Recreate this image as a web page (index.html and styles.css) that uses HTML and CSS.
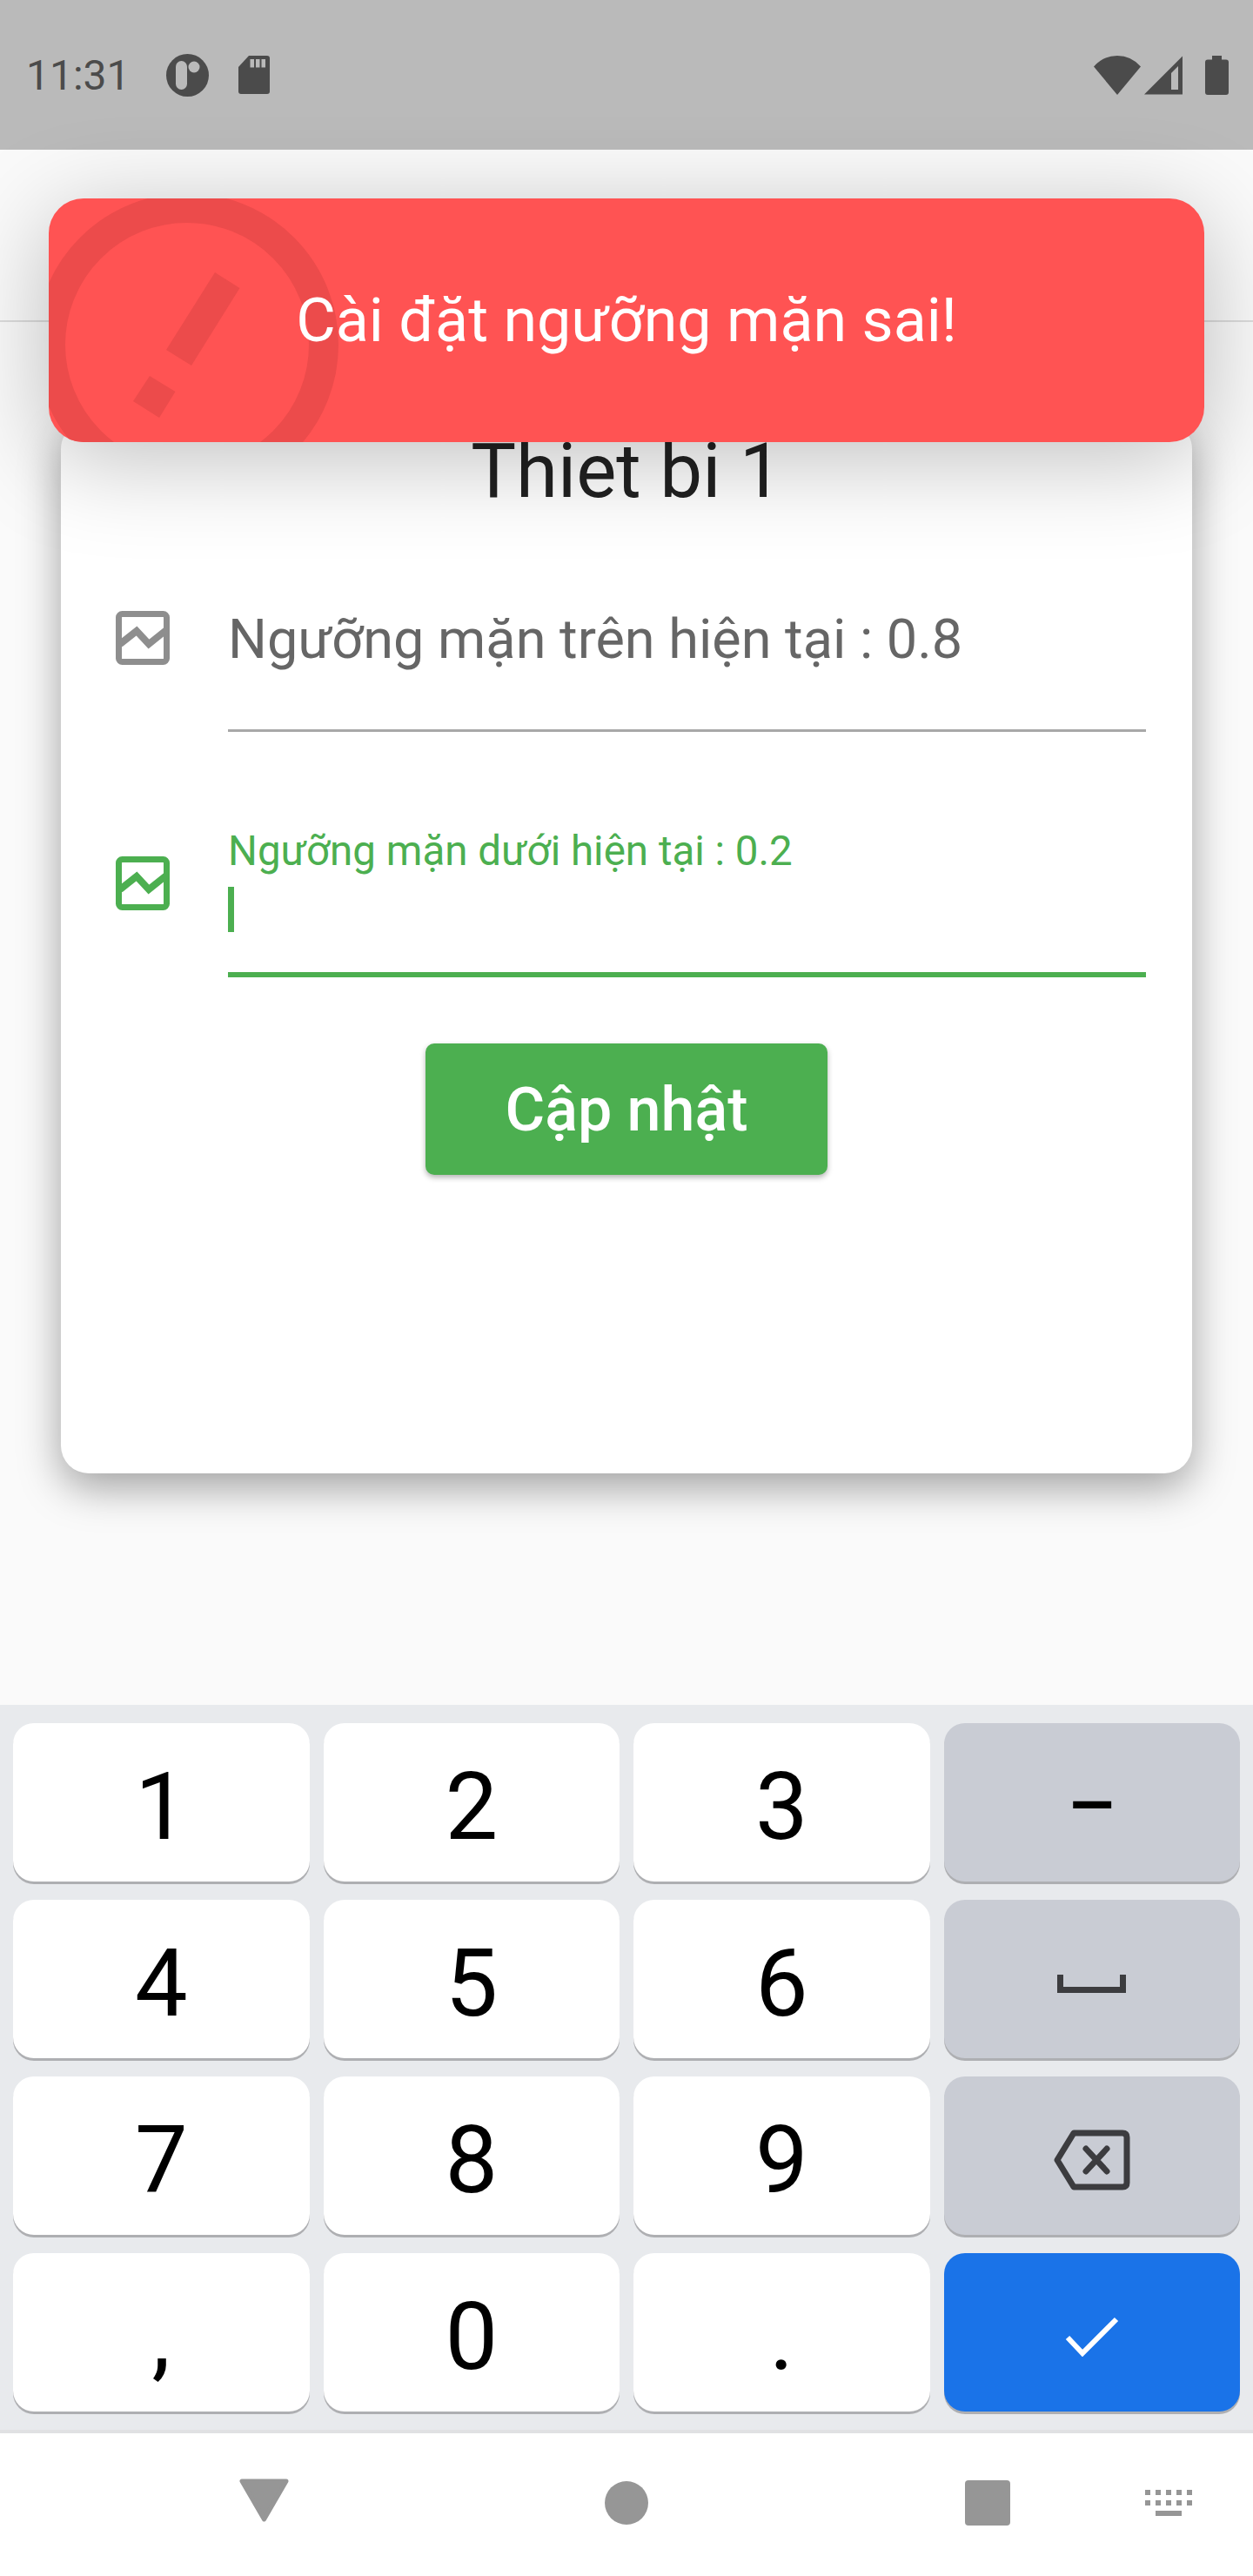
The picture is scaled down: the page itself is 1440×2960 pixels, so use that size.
FILE: index.html
```html
<!DOCTYPE html>
<html lang="vi">

<head>
    <meta charset="UTF-8">
    <meta name="viewport" content="width=device-width, initial-scale=1.0">
    <title>Cài đặt ngưỡng mặn</title>
    <link rel="stylesheet" href="styles.css">
</head>

<body>
    <div class="screen">
        <div class="status-bar">
            <span class="time">11:31</span>
            <svg class="status-app" width="49" height="49" viewBox="0 0 49 49">
                <circle cx="24.5" cy="24.5" r="24.5" fill="#4b4b4b" />
                <rect x="11" y="8" width="13" height="33" rx="6.5" fill="#bababa" />
                <circle cx="32" cy="15" r="6.5" fill="#bababa" />
            </svg>
            <svg class="status-sd" width="36" height="44" viewBox="0 0 36 44">
                <path d="M12 0H33a3 3 0 0 1 3 3V41a3 3 0 0 1-3 3H3a3 3 0 0 1-3-3V13Z" fill="#4b4b4b" />
                <path d="M13.5 4H18V13.5H13.5ZM20 4H24.5V13.5H20ZM26.5 4H31V13.5H26.5Z" fill="#bababa" />
            </svg>
            <div class="status-right">
                <svg width="54" height="45" viewBox="0 0 54 45">
                    <path d="M0 12.500Q11 0 27 0T54 12.500L27 45Z" fill="#4b4b4b" />
                </svg>
                <svg class="status-signal" width="44" height="45" viewBox="0 0 44 45">
                    <path d="M0 44.500L44 0.500V44.500Z" fill="#4b4b4b" />
                    <path d="M31 20L39 12V39H31Z" fill="#bababa" />
                </svg>
                <svg class="status-battery" width="27" height="45" viewBox="0 0 27 45">
                    <path d="M8 0H19V4.500H24a3 3 0 0 1 3 3V42a3 3 0 0 1-3 3H3a3 3 0 0 1-3-3V7.500a3 3 0 0 1 3-3H8Z" fill="#4b4b4b" />
                </svg>
            </div>
        </div>

        <div class="toast">
            <svg class="toast-icon" viewBox="0 0 1328 280">
                <circle cx="159" cy="168" r="157" fill="none" stroke="#ec4b4b" stroke-width="34" />
                <path d="M191 85L219.500 103L164 192L135 174ZM116 204L145.500 222L127 252L97 233Z" fill="#ec4b4b" />
            </svg>
            <span class="toast-text">Cài đặt ngưỡng mặn sai!</span>
        </div>

        <div class="page">
            <div class="app-bar"></div>
            <div class="card">
                <h1 class="card-title">Thiet bi 1</h1>

                <div class="field-row">
                    <svg class="field-icon" width="62" height="62" viewBox="0 0 62 62">
                        <rect x="3.500" y="3.500" width="55" height="55" rx="4" fill="none" stroke="#8e8e8e" stroke-width="7" />
                        <path d="M5 38L24 23L38 38L58 22" fill="none" stroke="#8e8e8e" stroke-width="8" />
                    </svg>
                    <div class="field">
                        <div class="field-value">Ngưỡng mặn trên hiện tại : 0.8</div>
                    </div>
                </div>

                <div class="field-row field-row-active">
                    <svg class="field-icon" width="62" height="62" viewBox="0 0 62 62">
                        <rect x="3.500" y="3.500" width="55" height="55" rx="4" fill="none" stroke="#4caf50" stroke-width="7" />
                        <path d="M5 38L24 23L38 38L58 22" fill="none" stroke="#4caf50" stroke-width="8" />
                    </svg>
                    <div class="field">
                        <div class="field-label">Ngưỡng mặn dưới hiện tại : 0.2</div>
                        <div class="caret"></div>
                    </div>
                </div>

                <button class="update-btn">Cập nhật</button>
            </div>
        </div>

        <div class="keyboard">
            <div class="key">1</div>
            <div class="key">2</div>
            <div class="key">3</div>
            <div class="key key-fn key-dash">–</div>
            <div class="key">4</div>
            <div class="key">5</div>
            <div class="key">6</div>
            <div class="key key-fn">
                <svg class="space-icon" width="79" height="21" viewBox="0 0 79 21">
                    <path d="M3.500 1V17.500H75.500V1" fill="none" stroke="#3c3c3f" stroke-width="7" stroke-linecap="round" />
                </svg>
            </div>
            <div class="key">7</div>
            <div class="key">8</div>
            <div class="key">9</div>
            <div class="key key-fn">
                <svg class="icon-key" width="88" height="70" viewBox="0 0 88 70">
                    <path d="M4 35L23 4H79Q84 4 84 9V61Q84 66 79 66H23Z" fill="none" stroke="#3c3c3f" stroke-width="7" stroke-linejoin="round" />
                    <path d="M37 22L61 48M61 22L37 48" fill="none" stroke="#3c3c3f" stroke-width="7" stroke-linecap="round" />
                </svg>
            </div>
            <div class="key">,</div>
            <div class="key">0</div>
            <div class="key">.</div>
            <div class="key key-enter">
                <svg class="icon-key" width="62" height="46" viewBox="0 0 62 46">
                    <path d="M3 24L20 42L59 3" fill="none" stroke="#fff" stroke-width="6" />
                </svg>
            </div>
        </div>

        <div class="nav-bar">
            <svg class="nav-back" width="57" height="50" viewBox="0 0 57 50">
                <path d="M3 3H54L28.500 47Z" fill="#969696" stroke="#969696" stroke-width="5" stroke-linejoin="round" />
            </svg>
            <div class="nav-home"></div>
            <div class="nav-recent"></div>
            <svg class="nav-keys" width="54" height="30" viewBox="0 0 54 30">
                <path d="M0 0h6v6h-6ZM12 0h6v6h-6ZM24 0h6v6h-6ZM36 0h6v6h-6ZM48 0h6v6h-6ZM0 12h6v6h-6ZM12 12h6v6h-6ZM24 12h6v6h-6ZM36 12h6v6h-6ZM48 12h6v6h-6ZM12 24h30v6h-30Z" fill="#969696" />
            </svg>
        </div>
    </div>
</body>

</html>
```

FILE: styles.css
```css
body {
    margin: 0;
    font-family: 'Roboto', sans-serif;
    background-color: #fafafa;
}

.screen {
    position: relative;
    display: flex;
    flex-direction: column;
    height: 2960px;
    overflow: hidden;
}

/* status bar */
.status-bar {
    display: flex;
    align-items: center;
    height: 172px;
    padding: 0 28px 0 30px;
    box-sizing: border-box;
    background-color: #bababa;
    color: #4b4b4b;
    flex-shrink: 0;
}

.time {
    width: 115px;
    font-size: 48px;
    white-space: nowrap;
}

.status-app {
    margin-left: 46px;
}

.status-sd {
    margin-left: 34px;
}

.status-right {
    display: flex;
    align-items: center;
    margin-left: auto;
}

.status-signal {
    margin-left: 4px;
}

.status-battery {
    margin-left: 26px;
}

/* toast */
.toast {
    position: absolute;
    top: 228px;
    left: 56px;
    z-index: 5;
    display: flex;
    align-items: center;
    justify-content: center;
    width: 1328px;
    height: 280px;
    border-radius: 40px;
    background-color: #ff5353;
    box-shadow: 0 20px 110px rgba(0, 0, 0, 0.25);
    overflow: hidden;
}

.toast-icon {
    position: absolute;
    top: 0;
    left: 0;
    width: 1328px;
    height: 280px;
}

.toast-text {
    position: relative;
    font-size: 70px;
    color: #fff;
}

.page {
    flex: 1;
    display: flex;
    flex-direction: column;
    min-height: 0;
}

.app-bar {
    height: 196px;
    border-bottom: 2px solid #dcdcdc;
    flex-shrink: 0;
}

/* card */
.card {
    display: flex;
    flex-direction: column;
    height: 1209px;
    margin: 114px 70px 0;
    padding: 7px 53px 0 63px;
    box-sizing: border-box;
    border-radius: 32px;
    background-color: #fff;
    box-shadow: 0 16px 48px rgba(0, 0, 0, 0.36);
}

.card-title {
    margin: 0 0 0 -10px;
    font-size: 87px;
    font-weight: 400;
    line-height: 100px;
    text-align: center;
    color: #212121;
}

.field-row {
    display: flex;
    gap: 67px;
    margin-top: 101px;
}

.field-row-active {
    margin-top: 109px;
}

.field-icon {
    flex-shrink: 0;
    margin-top: 10px;
}

.field-row-active .field-icon {
    margin-top: 34px;
}

.field {
    flex: 1;
    padding-bottom: 68px;
    border-bottom: 3px solid #a8a8a8;
}

.field-value {
    padding-top: 8px;
    font-size: 63px;
    line-height: 70px;
    color: #666;
    white-space: nowrap;
}

.field-row-active .field {
    padding-bottom: 46px;
    border-bottom: 6px solid #4caf50;
}

.field-label {
    position: relative;
    top: 1px;
    font-size: 47.500px;
    line-height: 54px;
    color: #4caf50;
    white-space: nowrap;
}

.caret {
    width: 7px;
    height: 52px;
    margin-top: 15px;
    background-color: #4caf50;
}

.update-btn {
    align-self: center;
    width: 462px;
    height: 151px;
    margin: 76px 0 0 -10px;
    border: 0;
    border-radius: 10px;
    background-color: #4caf50;
    box-shadow: 0 3px 6px rgba(0, 0, 0, 0.3);
    font-family: inherit;
    font-size: 70px;
    font-weight: 500;
    color: #fff;
}

/* keyboard */
.keyboard {
    display: grid;
    grid-template-columns: repeat(4, 1fr);
    grid-auto-rows: 182px;
    gap: 21px 16px;
    padding: 21px 15px;
    background-color: #e8eaed;
    border-bottom: 4px solid #e0e1e3;
    flex-shrink: 0;
}

.key {
    display: flex;
    align-items: center;
    justify-content: center;
    padding-top: 10px;
    box-sizing: border-box;
    border-radius: 24px;
    background-color: #fff;
    box-shadow: 0 3px 0 #aeafb2;
    font-size: 108px;
    color: #000;
}

.key-fn {
    background-color: #c9ccd4;
}

.key-enter {
    background-color: #1a73e8;
}

.key-dash {
    padding-top: 6px;
    font-size: 88px;
    font-weight: 500;
}

.icon-key,
.space-icon {
    display: block;
}

/* nav bar */
.nav-bar {
    display: flex;
    align-items: center;
    height: 164px;
    padding: 0 0 4px 275px;
    box-sizing: border-box;
    background-color: #fff;
    flex-shrink: 0;
}

.nav-back {
    margin-bottom: 7px;
}

.nav-home {
    width: 50px;
    height: 50px;
    margin-left: 363px;
    border-radius: 50%;
    background-color: #969696;
}

.nav-recent {
    width: 52px;
    height: 52px;
    margin-left: 364px;
    border-radius: 4px;
    background-color: #969696;
}

.nav-keys {
    margin-left: 155px;
}
```
